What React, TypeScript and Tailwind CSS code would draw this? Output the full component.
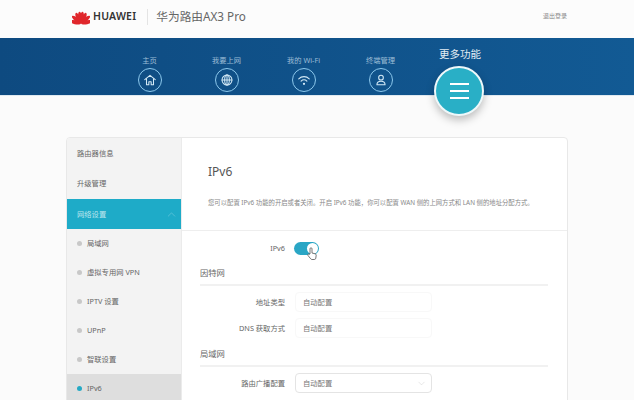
import { ChevronDown, ChevronUp } from "lucide-react";

const font = { fontFamily: '"Noto Sans", "Noto Sans CJK SC", sans-serif' };

function HuaweiLogo() {
  // eight petals fanned around the bottom centre
  const angles = [-78, -50, -26, -8, 8, 26, 50, 78];
  return (
    <svg width="18" height="15" viewBox="0 0 36 30">
      {angles.map((a) => (
        <ellipse key={a} cx="18" cy="15" rx="4" ry="11.5" fill="#e0272c" transform={`rotate(${a} 18 27)`} />
      ))}
    </svg>
  );
}

function NavIcon({ children }: { children: React.ReactNode }) {
  return (
    <div className="w-6 h-6 rounded-full border border-[#8cc8ec] flex items-center justify-center">
      <svg width="14" height="14" viewBox="0 0 24 24" fill="none" stroke="#d3e9f6" strokeWidth="1.8" strokeLinecap="round" strokeLinejoin="round">
        {children}
      </svg>
    </div>
  );
}

function NavItem({ label, children }: { label: string; children: React.ReactNode }) {
  return (
    <div className="w-[77px] flex flex-col items-center gap-[3px] pt-[17px]">
      <span className="text-[7.3px] leading-[10px] text-[#9dbdd6] whitespace-nowrap">{label}</span>
      <NavIcon>{children}</NavIcon>
    </div>
  );
}

function SideItem({ label, dot, active }: { label: string; dot?: boolean; active?: boolean }) {
  return (
    <div className={`h-[29px] flex items-center gap-[5px] pl-[10px] text-[7.3px] text-[#666] ${active ? "bg-[#dedede]" : ""}`}>
      {dot && <span className={`w-[5px] h-[5px] rounded-full ${active ? "bg-[#25a9c4]" : "bg-[#c8c8c8]"}`} />}
      <span>{label}</span>
    </div>
  );
}

function Field({ label, value, select }: { label: string; value: string; select?: boolean }) {
  return (
    <div className="flex items-center h-[20px]">
      <span className="w-[85px] text-right text-[7.3px] text-[#666] whitespace-nowrap">{label}</span>
      <div
        className={`ml-[10px] w-[137px] h-[20px] flex items-center justify-between pl-[7px] pr-[4px] rounded-[4px] text-[7.3px] text-[#777] ${
          select ? "border border-[#e4e4e4] bg-white" : "border border-[#f8f8f8] bg-white"
        }`}
      >
        <span>{value}</span>
        {select && <ChevronDown size={11} strokeWidth={1} color="#ccc" />}
      </div>
    </div>
  );
}

function SectionTitle({ label }: { label: string }) {
  return (
    <div className="pb-[5px] border-b-2 border-[#f1f1f1] text-[8.3px] leading-[12px] text-[#666]">{label}</div>
  );
}

export default function App() {
  return (
    <div className="w-[634px] h-[400px] overflow-hidden bg-[#fbfbfb] relative" style={font}>
      <header className="h-[38px] flex items-center pl-[72px] pb-[4px] bg-[#fcfcfc]">
        <HuaweiLogo />
        <span className="ml-[3px] text-[10.5px] font-semibold text-[#333] tracking-[0.2px]">HUAWEI</span>
        <span className="ml-[11px] w-px h-[16px] bg-[#e4e4e4]" />
        <span className="ml-[8px] text-[11.7px] text-[#666]">华为路由AX3 Pro</span>
        <span className="absolute left-[543px] top-[12px] text-[6px] text-[#888]">退出登录</span>
      </header>

      <nav className="h-[58px] bg-gradient-to-r from-[#0e4a80] to-[#125a94] flex pl-[111px] border-b border-[#dfe9f0]">
        <NavItem label="主页">
          <path d="M3 11.5 12 4l9 7.5" />
          <path d="M6 10v10h4v-5h4v5h4V10" />
        </NavItem>
        <NavItem label="我要上网">
          <circle cx="12" cy="12" r="8.5" />
          <path d="M3.5 12h17M12 3.5v17" />
          <ellipse cx="12" cy="12" rx="4" ry="8.5" />
        </NavItem>
        <NavItem label="我的 Wi-Fi">
          <path d="M3 10c5-5 13-5 18 0" />
          <path d="M7 14c3-3 7-3 10 0" />
          <circle cx="12" cy="18.5" r="1" fill="#d3e9f6" />
        </NavItem>
        <NavItem label="终端管理">
          <circle cx="12" cy="8" r="4" />
          <path d="M5 20c0-4 3-6 7-6s7 2 7 6z" />
        </NavItem>
        <div className="flex flex-col items-center w-[82px] pt-[10px]">
          <span className="text-[10.5px] leading-[13px] text-[#e3edf4] whitespace-nowrap">更多功能</span>
        </div>
      </nav>

      <div className="absolute left-[434px] top-[66px] w-[50px] h-[50px] rounded-full bg-[#29afc6] border-2 border-[#eef8fa] shadow-[0_4px_8px_rgba(0,0,0,0.25)] flex flex-col items-center justify-center gap-[5.5px]">
        <span className="w-[19px] h-[1.5px] bg-white" />
        <span className="w-[19px] h-[1.5px] bg-white" />
        <span className="w-[19px] h-[1.5px] bg-white" />
      </div>

      <main className="ml-[66px] mt-[41px] w-[502px] h-[300px] flex border border-[#e8e8e8] rounded-t-[4px] overflow-hidden bg-white">
        <aside className="w-[115px] shrink-0 bg-[#f3f3f3] border-r border-[#ebebeb] flex flex-col">
          <div className="h-[30px] flex items-center pl-[10px] text-[7.3px] text-[#666]">路由器信息</div>
          <div className="h-[31px] flex items-center pl-[10px] text-[7.3px] text-[#666]">升级管理</div>
          <div className="h-[30px] flex items-center justify-between pl-[10px] pr-[3px] text-[7.3px] text-[#bfe6ee] bg-[#1eabc8]">
            <span>网络设置</span>
            <ChevronUp size={13} strokeWidth={1} color="#7fd0e0" />
          </div>
          <SideItem dot label="局域网" />
          <SideItem dot label="虚拟专用网 VPN" />
          <SideItem dot label="IPTV 设置" />
          <SideItem dot label="UPnP" />
          <SideItem dot label="智联设置" />
          <SideItem dot active label="IPv6" />
        </aside>

        <section className="flex-1 min-w-0">
          <div className="h-[93px] border-b border-[#eeeeee] pl-[26px] pt-[25px]">
            <div className="text-[12px] leading-[18px] text-[#555]">IPv6</div>
            <p className="mt-[17px] text-[6.35px] leading-[10px] text-[#888] whitespace-nowrap">
              您可以配置 IPv6 功能的开启或者关闭。开启 IPv6 功能，你可以配置 WAN 侧的上网方式和 LAN 侧的地址分配方式。
            </p>
          </div>

          <div className="pl-[18px] pr-[19px] pt-[10px]">
            <div className="flex items-center h-[14px] relative">
              <span className="w-[85px] text-right text-[7.3px] text-[#666]">IPv6</span>
              <span className="ml-[9px] w-[25px] h-[13px] rounded-full bg-[#2aa6c5] relative">
                <span className="absolute right-[1px] top-[1px] w-[11px] h-[11px] rounded-full bg-white" />
              </span>
              {/* mouse cursor over the switch */}
              <svg className="absolute left-[107px] top-[6px]" width="10" height="14" viewBox="0 0 10 14" fill="#fff" stroke="#555" strokeWidth="0.8" strokeLinejoin="round">
                <path d="M3 7V1.8a1 1 0 0 1 2 0V6l3.2.8c.7.2 1 .7 1 1.4l-.4 3c-.1.8-.7 1.3-1.5 1.3H5c-.6 0-1-.3-1.4-.8L1 8.5c-.6-1 .6-2 1.4-1.2z" />
              </svg>
            </div>

            <div className="mt-[12px] mb-[6px]">
              <SectionTitle label="因特网" />
            </div>
            <div className="flex flex-col gap-[6px]">
              <Field label="地址类型" value="自动配置" />
              <Field label="DNS 获取方式" value="自动配置" />
            </div>

            <div className="mt-[10px] mb-[6px]">
              <SectionTitle label="局域网" />
            </div>
            <div className="flex flex-col gap-[7px]">
              <Field select label="路由广播配置" value="自动配置" />
              <Field select label="" value="" />
            </div>
          </div>
        </section>
      </main>
    </div>
  );
}
